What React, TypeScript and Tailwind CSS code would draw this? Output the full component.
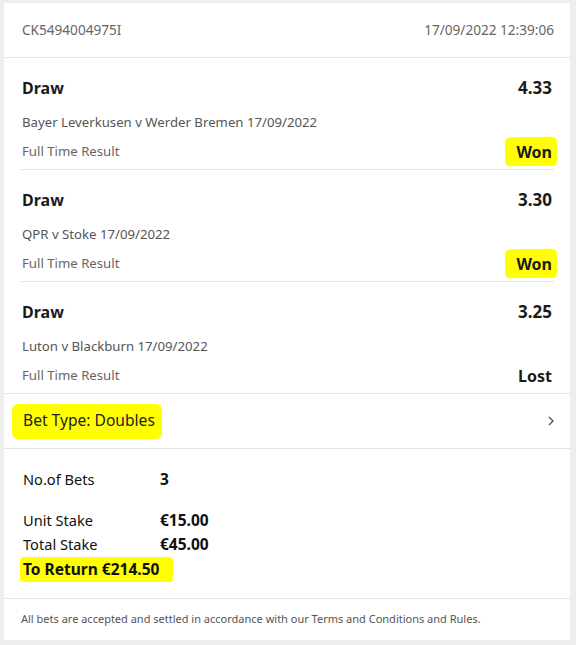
import React from "react";

const font = { fontFamily: '"Segoe UI", "Noto Sans", "Open Sans", sans-serif' };

function Leg({ odds, event, result, highlight, last }: { odds: string; event: string; result: string; highlight: boolean; last?: boolean }) {
  return (
    <div className={`px-[2px] pt-[18px] pb-[7px] ${last ? "" : "border-b border-[#e3e3e3]"}`}>
      <div className="flex h-[24px] items-center justify-between font-bold text-[#1b1b1b]">
        <span className="text-[16px]">Draw</span>
        <span className="text-[17px]">{odds}</span>
      </div>
      <div className="mt-[13px] flex h-[20px] items-center text-[13.2px] text-[#555]">{event}</div>
      <div className="mt-[9px] flex h-[20px] items-center justify-between">
        <span className="text-[13.2px] text-[#666]">Full Time Result</span>
        <span className="relative text-[16px] font-bold text-[#1b1b1b]">
          {highlight && (
            <span className="absolute -left-[11px] -right-[5px] -top-[3px] -bottom-[2px] -rotate-1 rounded-[5px] bg-[#ffff00]" />
          )}
          <span className="relative">{result}</span>
        </span>
      </div>
    </div>
  );
}

export default function App() {
  return (
    <div className="h-[645px] w-[576px] bg-[#ededed] pl-[4px] pt-[3px]" style={font}>
      <div className="h-[637px] w-[566px] bg-white">
        <div className="flex h-[55px] items-center justify-between border-b border-[#e3e3e3] pl-[18px] pr-[16px] text-[13.6px] text-[#666]">
          <span>CK5494004975I</span>
          <span>17/09/2022 12:39:06</span>
        </div>
        <div className="border-b border-[#e3e3e3] px-[16px]">
          <Leg odds="4.33" event="Bayer Leverkusen v Werder Bremen 17/09/2022" result="Won" highlight />
          <Leg odds="3.30" event="QPR v Stoke 17/09/2022" result="Won" highlight />
          <Leg odds="3.25" event="Luton v Blackburn 17/09/2022" result="Lost" highlight={false} last />
        </div>
        <div className="flex h-[55px] items-center justify-between border-b border-[#e3e3e3] pl-[19px] pr-[14px]">
          <span className="relative text-[15.6px] text-[#222]">
            <span className="absolute -left-[11px] -right-[7px] -top-[5px] -bottom-[6px] rounded-[6px] bg-[#ffff00]" />
            <span className="relative">Bet Type: Doubles</span>
          </span>
          <svg width="10" height="14" viewBox="0 0 10 14">
            <path d="M3 3 L7 7 L3 11" fill="none" stroke="#555" strokeWidth="1.4" />
          </svg>
        </div>
        <div className="border-b border-[#e3e3e3] pb-[16px] pl-[19px] pt-[19px] text-[14.6px] text-[#111]">
          <div className="flex h-[24px] items-center">
            <span className="w-[137px]">No.of Bets</span>
            <span className="text-[15.5px] font-bold">3</span>
          </div>
          <div className="mt-[17px] flex h-[24px] items-center">
            <span className="w-[137px]">Unit Stake</span>
            <span className="text-[15.5px] font-bold">€15.00</span>
          </div>
          <div className="flex h-[24px] items-center">
            <span className="w-[137px]">Total Stake</span>
            <span className="text-[15.5px] font-bold">€45.00</span>
          </div>
          <div className="flex h-[25px] items-center">
            <span className="relative text-[15.5px] font-bold">
              <span className="absolute -left-[3px] -right-[14px] -top-[1px] -bottom-[1px] rounded-[4px] bg-[#ffff00]" />
              <span className="relative">To Return €214.50</span>
            </span>
          </div>
        </div>
        <div className="flex h-[41px] items-center pl-[17px] text-[11px] text-[#555]">
          All bets are accepted and settled in accordance with our Terms and Conditions and Rules.
        </div>
      </div>
    </div>
  );
}
